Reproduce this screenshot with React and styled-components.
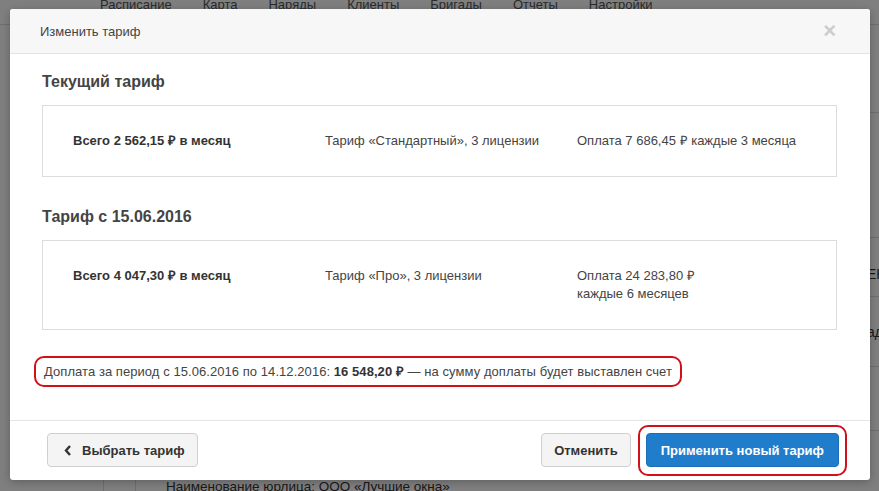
import styled, { createGlobalStyle } from "styled-components";

//==============================================================================
// GLOBAL
//==============================================================================
const GlobalStyle = createGlobalStyle`
  html, body {
    margin: 0;
    padding: 0;
    height: 100%;
    overflow: hidden;
    background: #fff;
    font-family: "Liberation Sans", Arial, sans-serif;
  }
`

//==============================================================================
// PAGE BEHIND THE MODAL
//==============================================================================
const Page = styled.div`
  position: relative;
  width: 879px;
  height: 491px;
  overflow: hidden;
  display: flex;
  flex-direction: column;
`

const Nav = styled.nav`
  height: 25px;
  flex: none;
  border-bottom: 1px solid #ddd;
  display: flex;
  align-items: flex-start;
  gap: 31px;
  padding-left: 100px;
  box-sizing: border-box;
`

const NavItem = styled.span`
  font-size: 13px;
  line-height: 13px;
  margin-top: -2px;
  color: #555;
`

const Main = styled.div`
  flex: 1;
  display: flex;
`

const SideCol = styled.div`
  width: ${props => props.$w}px;
  flex: none;
  border-right: 1px solid #ddd;
  box-sizing: border-box;
`

const Content = styled.div`
  flex: 1;
  display: flex;
  flex-direction: column;
`

const Row = styled.div`
  height: ${props => props.$h}px;
  flex: none;
  border-bottom: 1px solid #ddd;
  box-sizing: border-box;
  padding-top: ${props => props.$pt || 0}px;
  display: grid;
  grid-template-columns: 731px auto;
  align-items: center;
  font-size: 14px;
  color: #333;
  white-space: nowrap;
`

const LastRow = styled.div`
  padding: 48px 0 0 30px;
  font-size: 13.5px;
  color: #333;
  white-space: nowrap;
`

const Overlay = styled.div`
  position: absolute;
  inset: 0;
  background: rgba(0, 0, 0, 0.5);
`

//==============================================================================
// MODAL
//==============================================================================
const Dialog = styled.div`
  position: absolute;
  left: 10px;
  top: 9px;
  width: 860px;
  background: #fff;
  border-radius: 3px;
  box-shadow: 0 2px 8px rgba(0, 0, 0, 0.25);
  overflow: hidden;
  color: #333;
`

const Header = styled.div`
  height: 44px;
  background: #f7f7f7;
  border-bottom: 1px solid #e3e3e3;
  display: flex;
  align-items: center;
  justify-content: space-between;
  padding: 0 34px 0 30px;
`

const Title = styled.div`
  font-size: 13px;
  color: #444;
`

const Close = styled.span`
  font-size: 22px;
  font-weight: 700;
  color: #cdcdcd;
  line-height: 1;
`

const Body = styled.div`
  padding: 18px 33px 33px 32px;
`

const Heading = styled.h3`
  margin: ${props => props.$first ? '0' : '30px'} 0 0 0;
  font-size: 16px;
  line-height: 20px;
  font-weight: 700;
  color: #444;
`

const Card = styled.div`
  margin-top: 13px;
  border: 1px solid #dcdcdc;
  padding: 26px 30px;
  display: grid;
  grid-template-columns: 252px 252px 1fr;
  font-size: 13px;
  line-height: 18px;
  color: #444;
`

const Total = styled.div`
  font-weight: 700;
  color: #333;
`

const Highlight = styled.div`
  display: inline-block;
  margin: 26px 0 0 -8px;
  padding: 5px 8px;
  border: 2px solid #d0101b;
  border-radius: 10px;
  font-size: 13px;
  line-height: 17px;
  letter-spacing: 0.06px;
  color: #444;

  b {
    color: #333;
  }
`

const Footer = styled.div`
  border-top: 1px solid #e5e5e5;
  padding: 12px 31px 13px 37px;
  display: flex;
  justify-content: space-between;
  align-items: center;
`

const Group = styled.div`
  display: flex;
  gap: 15px;
`

const Button = styled.button`
  position: relative;
  height: 34px;
  padding: ${props => props.$pad || '0 14px'};
  display: flex;
  align-items: center;
  gap: 10px;
  border-radius: 4px;
  font-family: inherit;
  font-size: 13px;
  font-weight: 700;
  border: 1px solid ${props => props.$primary ? '#1b6fb8' : '#cfcfcf'};
  background: ${props => props.$primary ? '#1f7dcc' : '#f4f4f4'};
  color: ${props => props.$primary ? '#fff' : '#333'};

  ${props => props.$marked && `
    &::after {
      content: '';
      position: absolute;
      inset: -9px -9px -10px -9px;
      border: 2px solid #d0101b;
      border-radius: 10px;
    }
  `}
`

const Chevron = () => (
    <svg width="8" height="11" viewBox="0 0 8 11">
        <polyline points="6,1 2,5.5 6,10" fill="none" stroke="#333" strokeWidth="2.4"/>
    </svg>
)

const App = () => {
    return (
        <>
            <GlobalStyle/>
            <Page>
                <Nav>
                    {['Расписание', 'Карта', 'Наряды', 'Клиенты', 'Бригады', 'Отчеты', 'Настройки']
                        .map(item => <NavItem key={item}>{item}</NavItem>)}
                </Nav>
                <Main>
                    <SideCol $w={104}/>
                    <SideCol $w={32}/>
                    <Content>
                        <Row $h={88}/>
                        <Row $h={125}/>
                        <Row $h={59} $pt={14}><span/><span>ЕНВД</span></Row>
                        <Row $h={70}><span/><span>адрес</span></Row>
                        <Row $h={64}/>
                        <LastRow>Наименование юрлица: ООО «Лучшие окна»</LastRow>
                    </Content>
                </Main>
                <Overlay/>

                <Dialog>
                    <Header>
                        <Title>Изменить тариф</Title>
                        <Close>×</Close>
                    </Header>
                    <Body>
                        <Heading $first>Текущий тариф</Heading>
                        <Card>
                            <Total>Всего 2 562,15 ₽ в месяц</Total>
                            <div>Тариф «Стандартный», 3 лицензии</div>
                            <div>Оплата 7 686,45 ₽ каждые 3 месяца</div>
                        </Card>

                        <Heading>Тариф с 15.06.2016</Heading>
                        <Card>
                            <Total>Всего 4 047,30 ₽ в месяц</Total>
                            <div>Тариф «Про», 3 лицензии</div>
                            <div>Оплата 24 283,80 ₽<br/>каждые 6 месяцев</div>
                        </Card>

                        <Highlight>
                            Доплата за период с 15.06.2016 по 14.12.2016: <b>16 548,20 ₽</b> — на сумму доплаты будет выставлен счет
                        </Highlight>
                    </Body>
                    <Footer>
                        <Button $pad="0 12px 0 16px"><Chevron/>Выбрать тариф</Button>
                        <Group>
                            <Button $pad="0 12px">Отменить</Button>
                            <Button $primary $marked>Применить новый тариф</Button>
                        </Group>
                    </Footer>
                </Dialog>
            </Page>
        </>
    )
}

export default App;
